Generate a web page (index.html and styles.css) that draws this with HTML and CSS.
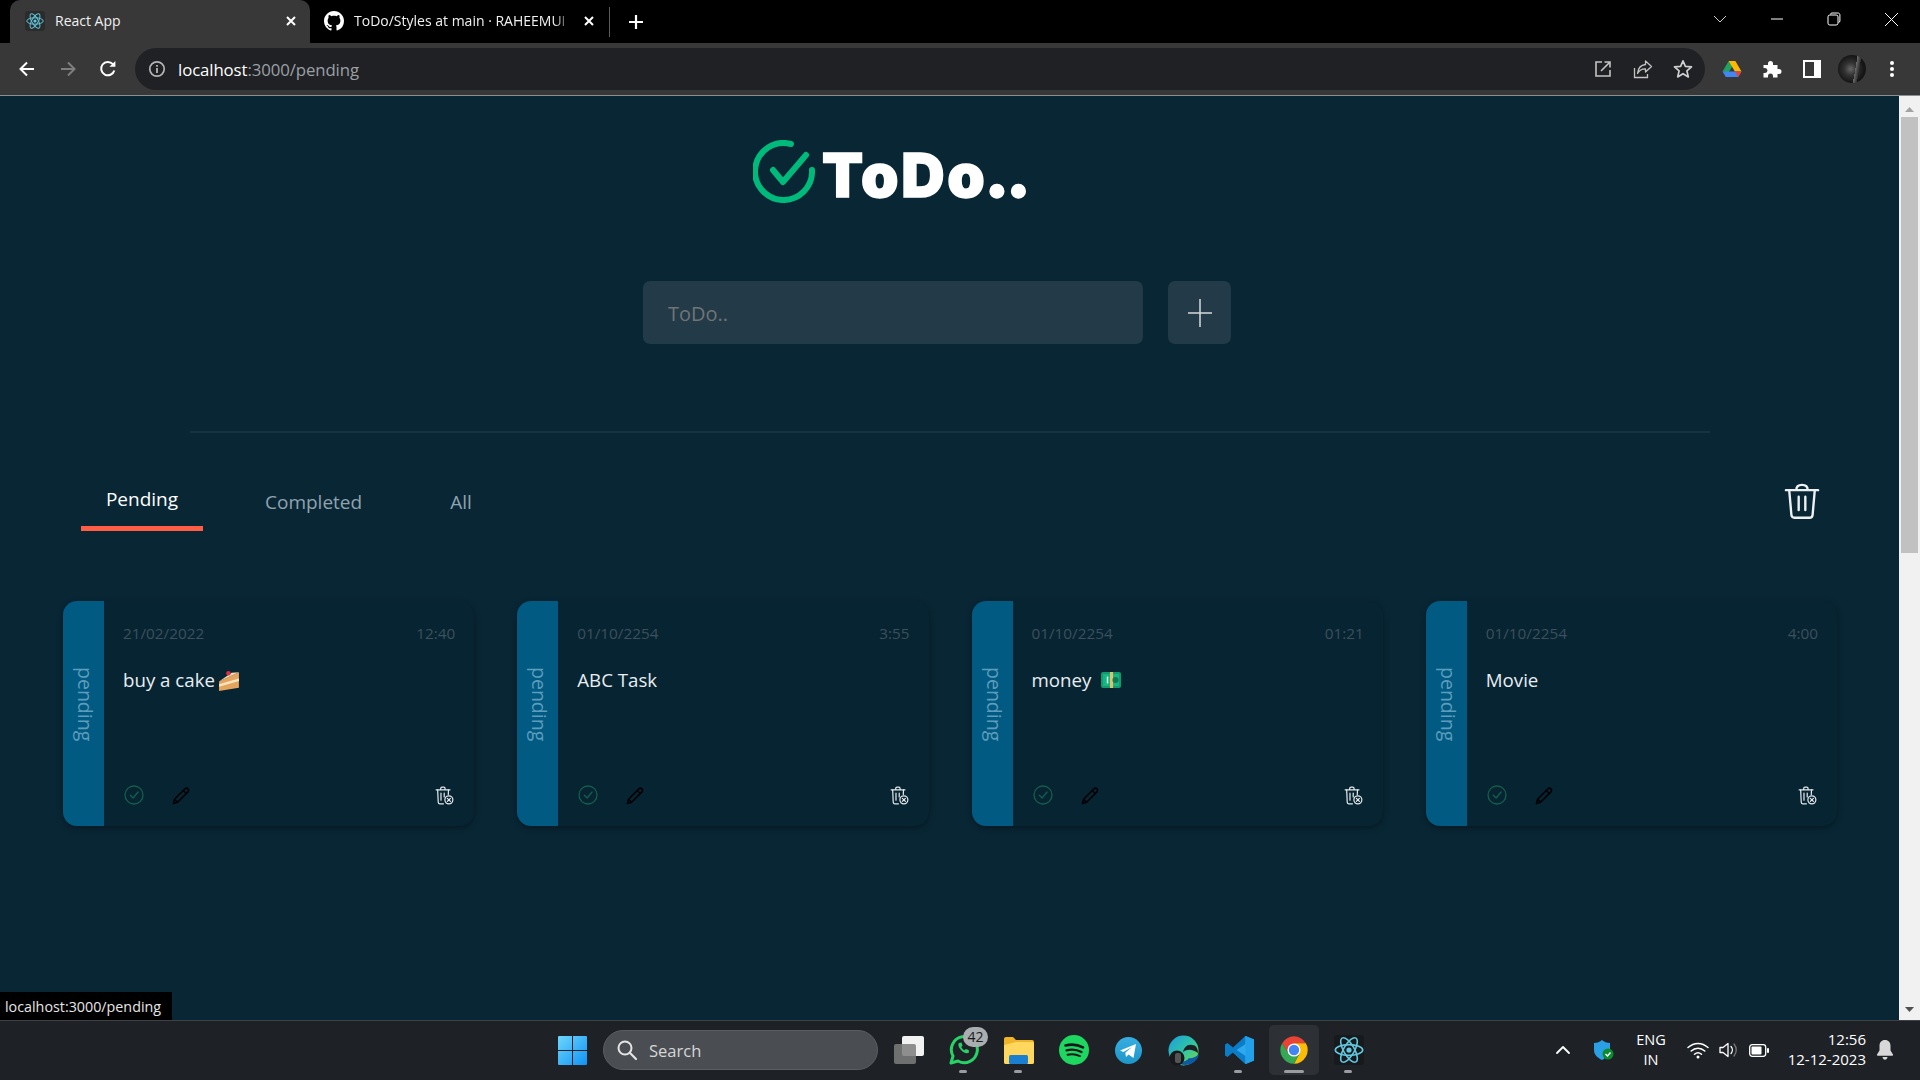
FILE: index.html
```html
<!DOCTYPE html>
<html lang="en">
<head>
<meta charset="utf-8">
<title>React App</title>
<link rel="stylesheet" href="styles.css">
</head>
<body>
<svg class="defs" width="0" height="0" aria-hidden="true">
  <defs>
    <symbol id="atom" viewBox="0 0 24 24">
      <g fill="none" stroke="#61c6de" stroke-width="1.3">
        <ellipse cx="12" cy="12" rx="11" ry="4.3"/>
        <ellipse cx="12" cy="12" rx="11" ry="4.3" transform="rotate(60 12 12)"/>
        <ellipse cx="12" cy="12" rx="11" ry="4.3" transform="rotate(120 12 12)"/>
      </g>
      <circle cx="12" cy="12" r="2.1" fill="#61c6de"/>
    </symbol>
    <symbol id="done" viewBox="0 0 20 20">
      <circle cx="10" cy="10" r="9" fill="none" stroke="#145f49" stroke-width="1.3"/>
      <path d="M6.300 10.200l2.800 2.800 5-6" fill="none" stroke="#145f49" stroke-width="1.3" stroke-linecap="round" stroke-linejoin="round"/>
    </symbol>
    <symbol id="pencil" viewBox="0 0 20 20">
      <path d="M1.500 18.500l1.200-4.600L13.600 3a2.200 2.200 0 0 1 3.200 3.200L5.900 17.200z" fill="none" stroke="#000" stroke-width="1.6" stroke-linejoin="round"/>
      <path d="M11.800 4.800l3.200 3.200M2.800 13.900l3.200 3.200" fill="none" stroke="#000" stroke-width="1.4"/>
    </symbol>
    <symbol id="bin" viewBox="0 0 20 20">
      <g fill="none" stroke="#e4e8ea" stroke-width="1.3" stroke-linecap="round" stroke-linejoin="round">
        <path d="M1.200 4h14.600M6 4V2.600c0-.9.6-1.400 1.400-1.400h1.800c.8 0 1.400.5 1.400 1.400V4"/>
        <path d="M2.800 4l.6 13.200c0 .9.7 1.500 1.500 1.500h4"/>
        <path d="M14.200 4l-.2 5M6.300 7.500v7.500M9.700 7.500v4"/>
        <circle cx="14.600" cy="14.600" r="4.200"/>
        <path d="M13 13l3.200 3.200M16.200 13L13 16.200"/>
      </g>
    </symbol>
  </defs>
</svg>

<div class="screen">
  <header class="tabstrip">
    <div class="tab tab-active">
      <span class="favicon"><svg width="18" height="18"><use href="#atom"/></svg></span>
      <span class="tab-title">React App</span>
      <svg class="tab-close" width="14" height="14" viewBox="0 0 14 14"><path d="M3 3l8 8M11 3l-8 8" stroke="#fff" stroke-width="2"/></svg>
    </div>
    <div class="tab">
      <svg class="gh" width="20" height="20" viewBox="0 0 16 16"><path fill="#fff" d="M8 0C3.58 0 0 3.58 0 8c0 3.54 2.29 6.53 5.47 7.59.4.07.55-.17.55-.38 0-.19-.01-.82-.01-1.49-2.01.37-2.53-.49-2.69-.94-.09-.23-.48-.94-.82-1.13-.28-.15-.68-.52-.01-.53.63-.01 1.08.58 1.23.82.72 1.21 1.87.87 2.33.66.07-.52.28-.87.51-1.07-1.78-.2-3.64-.89-3.64-3.95 0-.87.31-1.59.82-2.15-.08-.2-.36-1.02.08-2.12 0 0 .67-.21 2.2.82.64-.18 1.32-.27 2-.27.68 0 1.36.09 2 .27 1.53-1.04 2.2-.82 2.2-.82.44 1.1.16 1.92.08 2.12.51.56.82 1.27.82 2.15 0 3.07-1.87 3.75-3.65 3.95.29.25.54.73.54 1.48 0 1.07-.01 1.93-.01 2.2 0 .21.15.46.55.38A8.013 8.013 0 0016 8c0-4.42-3.58-8-8-8z"/></svg>
      <span class="tab-title tab-fade">ToDo/Styles at main · RAHEEMUI</span>
      <svg class="tab-close" width="14" height="14" viewBox="0 0 14 14"><path d="M3 3l8 8M11 3l-8 8" stroke="#fff" stroke-width="2"/></svg>
    </div>
    <span class="tab-sep"></span>
    <svg class="new-tab" width="18" height="18" viewBox="0 0 18 18"><path d="M9 2v14M2 9h14" stroke="#fff" stroke-width="2.2"/></svg>
    <div class="win-controls">
      <span class="win-btn"><svg width="14" height="10" viewBox="0 0 14 10"><path d="M1 2l6 6 6-6" fill="none" stroke="#cfcfcf" stroke-width="1"/></svg></span>
      <span class="win-btn"><svg width="14" height="14" viewBox="0 0 14 14"><path d="M1 7h12" stroke="#fff" stroke-width="1"/></svg></span>
      <span class="win-btn"><svg width="14" height="14" viewBox="0 0 14 14"><path d="M3.500 2.400c0-.9.6-1.400 1.400-1.400h6c1.200 0 2 .8 2 2v6c0 .8-.5 1.400-1.400 1.400" fill="none" stroke="#fff"/><rect x="1" y="3" width="10" height="10" rx="1.800" fill="#000" stroke="#fff"/></svg></span>
      <span class="win-btn"><svg width="15" height="15" viewBox="0 0 15 15"><path d="M1 1l13 13M14 1L1 14" stroke="#fff" stroke-width="1"/></svg></span>
    </div>
  </header>

  <nav class="toolbar">
    <span class="tool tool-back"><svg width="20" height="20" viewBox="0 0 20 20"><path d="M17 10H4M10 3.500L3.500 10l6.500 6.500" fill="none" stroke="#fff" stroke-width="2"/></svg></span>
    <span class="tool"><svg width="20" height="20" viewBox="0 0 20 20"><path d="M3 10h13M10 3.500l6.500 6.500-6.500 6.500" fill="none" stroke="#7e7e7e" stroke-width="2"/></svg></span>
    <span class="tool"><svg width="20" height="20" viewBox="0 0 20 20"><path d="M16.300 11.500A6.700 6.700 0 1 1 14.900 5.200" fill="none" stroke="#fff" stroke-width="2"/><path d="M11.400 7.800h6V1.900z" fill="#fff"/></svg></span>
    <div class="omnibox">
      <svg class="info" width="20" height="20" viewBox="0 0 20 20"><circle cx="10" cy="10" r="7.200" fill="none" stroke="#b5b5b5" stroke-width="1.7"/><path d="M10 9v5M10 6v1.700" stroke="#b5b5b5" stroke-width="1.800"/></svg>
      <span class="url"><span class="url-host">localhost</span>:3000/pending</span>
      <span class="omni-actions">
        <span class="tool"><svg width="18" height="18" viewBox="0 0 18 18"><path d="M8 2H2v14h14v-6" fill="none" stroke="#c4c4c4" stroke-width="1.600"/><path d="M7 11l9-9M10.500 2H16v5.500" fill="none" stroke="#c4c4c4" stroke-width="1.600"/></svg></span>
        <span class="tool"><svg width="20" height="20" viewBox="0 0 20 20"><path d="M1.500 9v9.500h13V15" fill="none" stroke="#c4c4c4" stroke-width="1.300"/><path d="M12.500 2l6 5.500-6 5.500V9.800C9 9.600 6.500 11 4.500 14.500 5 9.500 8 6 12.500 5.500z" fill="none" stroke="#c4c4c4" stroke-width="1.300" stroke-linejoin="round"/></svg></span>
        <span class="tool"><svg width="20" height="20" viewBox="0 0 20 20"><path d="M10 1.800l2.400 5.600 6.100.5-4.600 4 1.400 6L10 14.700l-5.300 3.200 1.400-6-4.600-4 6.100-.5z" fill="none" stroke="#d0d0d0" stroke-width="1.700" stroke-linejoin="round"/></svg></span>
      </span>
    </div>
    <div class="extensions">
      <span class="tool"><svg width="20" height="18" viewBox="0 0 20 18"><path d="M6.700 1h6.600l-3.400 6-3.300 5.500L.5 11.500z" fill="#1ea362"/><path d="M6.700 1h6.600l6.200 10.500h-6.600z" fill="#ffba00"/><path d="M.5 11.500h19l-3.300 5.500H3.800z" fill="#4285f4"/><path d="M13 11.500h6.500L16.200 17z" fill="#ea4335"/></svg></span>
      <span class="tool"><svg width="20" height="20" viewBox="0 0 20 20"><path d="M1.500 6H6V4.500a2.500 2.500 0 0 1 5 0V6h4.500v4H17a2.500 2.500 0 0 1 0 5h-1.500v3.500H11V17a2.500 2.500 0 0 0-5 0v1.500H1.500V14H3a2.500 2.500 0 0 0 0-5H1.500z" fill="#fff"/></svg></span>
      <span class="tool"><svg width="18" height="18" viewBox="0 0 18 18"><path fill="#fff" d="M0 0h18v18H0z"/><path fill="#383838" d="M2 2h9v14H2z"/></svg></span>
      <span class="tool"><span class="avatar"></span></span>
      <span class="tool"><svg width="6" height="18" viewBox="0 0 6 18"><circle cx="3" cy="3" r="2" fill="#fff"/><circle cx="3" cy="9" r="2" fill="#fff"/><circle cx="3" cy="15" r="2" fill="#fff"/></svg></span>
    </div>
  </nav>

  <div class="viewport">
    <main class="page">
      <div class="brand">
        <svg width="62" height="63" viewBox="0 0 62 63"><path d="M38 4A28.500 28.500 0 1 0 59 30" fill="none" stroke="#00ba7c" stroke-width="6" stroke-linecap="round"/><path d="M20 30l10 12 23-27" fill="none" stroke="#00ba7c" stroke-width="6" stroke-linecap="round" stroke-linejoin="round"/></svg>
        <h1 class="brand-name">ToDo<span class="brand-dots">..</span></h1>
      </div>

      <form class="add-form">
        <input class="add-input" type="text" placeholder="ToDo..">
        <button class="add-btn" type="button" aria-label="Add"><svg width="26" height="30" viewBox="0 0 26 30"><path d="M13 1v28M1 15h24" stroke="#d5d9dc" stroke-width="1.500"/></svg></button>
      </form>

      <hr class="divider">

      <div class="filters">
        <a class="filter filter-active">Pending</a>
        <a class="filter">Completed</a>
        <a class="filter">All</a>
        <svg class="clear-all" width="36" height="37" viewBox="0 0 38 38"><g fill="none" stroke="#eef1f2" stroke-width="2.500" stroke-linecap="round" stroke-linejoin="round"><path d="M2 7h34M13 7C13 3.500 15.500 1.500 19 1.500S25 3.500 25 7"/><path d="M5.500 7l2.300 26c.2 2 1.300 3.200 3.200 3.200h16c1.900 0 3-1.200 3.200-3.200l2.300-26"/><path d="M15.500 14v14M22.500 14v14"/></g></svg>
      </div>

      <section class="cards">
        <article class="card">
          <div class="card-status"><span>pending</span></div>
          <div class="card-body">
            <div class="card-meta"><span>21/02/2022</span><span>12:40</span></div>
            <p class="card-title">buy a cake<svg class="emoji" width="23" height="23" viewBox="0 0 22 22"><path d="M1 12L20 3v15L1 21z" fill="#e5a45c"/><path d="M1 12L13 3.500 20 3 1 12z" fill="#f3dcb6"/><path d="M1 14.500l19-5.500v2.500L1 17z" fill="#f7e4c3"/><circle cx="10" cy="4" r="2.200" fill="#dd2e44"/></svg></p>
            <div class="card-actions"><svg class="check" width="20" height="20"><use href="#done"/></svg><svg class="edit" width="19" height="19"><use href="#pencil"/></svg><svg class="remove" width="19" height="19"><use href="#bin"/></svg></div>
          </div>
        </article>
        <article class="card">
          <div class="card-status"><span>pending</span></div>
          <div class="card-body">
            <div class="card-meta"><span>01/10/2254</span><span>3:55</span></div>
            <p class="card-title">ABC Task</p>
            <div class="card-actions"><svg class="check" width="20" height="20"><use href="#done"/></svg><svg class="edit" width="19" height="19"><use href="#pencil"/></svg><svg class="remove" width="19" height="19"><use href="#bin"/></svg></div>
          </div>
        </article>
        <article class="card">
          <div class="card-status"><span>pending</span></div>
          <div class="card-body">
            <div class="card-meta"><span>01/10/2254</span><span>01:21</span></div>
            <p class="card-title">money<svg class="emoji-money" width="20" height="16" viewBox="0 0 20 16"><rect width="20" height="16" rx="2" fill="#0f9d6e"/><rect x="2" y="2" width="16" height="12" fill="#17b584"/><rect x="9" width="3" height="16" fill="#e7bd68"/><circle cx="14.500" cy="8" r="3" fill="#0c7a55"/><path d="M6.500 4.500v7" stroke="#c9f3e1" stroke-width="1.500"/></svg></p>
            <div class="card-actions"><svg class="check" width="20" height="20"><use href="#done"/></svg><svg class="edit" width="19" height="19"><use href="#pencil"/></svg><svg class="remove" width="19" height="19"><use href="#bin"/></svg></div>
          </div>
        </article>
        <article class="card">
          <div class="card-status"><span>pending</span></div>
          <div class="card-body">
            <div class="card-meta"><span>01/10/2254</span><span>4:00</span></div>
            <p class="card-title">Movie</p>
            <div class="card-actions"><svg class="check" width="20" height="20"><use href="#done"/></svg><svg class="edit" width="19" height="19"><use href="#pencil"/></svg><svg class="remove" width="19" height="19"><use href="#bin"/></svg></div>
          </div>
        </article>
      </section>
      <div class="status-bubble">localhost:3000/pending</div>
    </main>
    <aside class="scrollbar">
      <svg width="21" height="17" viewBox="0 0 21 17"><path d="M10.500 7L15 12H6z" fill="#a3a3a3"/></svg>
      <span class="thumb"></span>
      <svg class="scroll-down" width="21" height="17" viewBox="0 0 21 17"><path d="M10.500 10L15 5H6z" fill="#505050"/></svg>
    </aside>
  </div>

  <footer class="taskbar">
    <svg class="start" width="29" height="29" viewBox="0 0 29 29"><defs><linearGradient id="win" x1="0" y1="0" x2="1" y2="1"><stop offset="0" stop-color="#6fd6fb"/><stop offset="1" stop-color="#0e93f5"/></linearGradient></defs><path fill="url(#win)" d="M0 1a1 1 0 0 1 1-1h13v14H0zM15 0h13a1 1 0 0 1 1 1v13H15zM0 15h14v14H1a1 1 0 0 1-1-1zM15 15h14v13a1 1 0 0 1-1 1H15z"/></svg>
    <div class="search">
      <svg width="22" height="22" viewBox="0 0 22 22"><circle cx="9" cy="9" r="6.500" fill="none" stroke="#e4e4e4" stroke-width="2"/><path d="M13.800 13.800L20 20" stroke="#e4e4e4" stroke-width="2.200" stroke-linecap="round"/></svg>
      <span>Search</span>
    </div>
    <div class="apps">
      <span class="app"><svg width="30" height="28" viewBox="0 0 30 28"><rect x="8" y="0" width="22" height="20" rx="2" fill="#f2f2f2"/><rect x="0" y="8" width="22" height="20" rx="2" fill="#7c7c7c" fill-opacity=".85"/></svg></span>
      <span class="app app-open"><svg width="30" height="32" viewBox="0 0 30 32"><path d="M2 29l2-7a13 13 0 1 1 5 5z" fill="none" stroke="#25d366" stroke-width="3" stroke-linejoin="round"/><path d="M10 9c-1.500 2 0 5 2.500 7.500S18 20 20 18.500l-.3-2.500-3-1-1.200 1.300c-1.500-.6-2.500-1.700-3.200-3.200L13.500 11.500l-1-3z" fill="#25d366"/></svg><span class="badge">42</span></span>
      <span class="app app-open"><svg width="31" height="28" viewBox="0 0 31 28"><path d="M1 3a2 2 0 0 1 2-2h7l3 3h16a2 2 0 0 1 2 2v20a2 2 0 0 1-2 2H3a2 2 0 0 1-2-2z" fill="#f0b429"/><path d="M1 9l12-3h16a2 2 0 0 1 2 2v18a2 2 0 0 1-2 2H3a2 2 0 0 1-2-2z" fill="#ffd75e"/><rect x="6" y="19" width="19" height="9" rx="1.500" fill="#1a7fd1"/></svg></span>
      <span class="app"><svg width="30" height="30" viewBox="0 0 30 30"><circle cx="15" cy="15" r="15" fill="#1ed760"/><g fill="none" stroke="#14181c" stroke-linecap="round"><path d="M6.500 10.500c6-1.500 12-1 17.500 1.800" stroke-width="2.600"/><path d="M7.500 15.300c5-1.200 10.500-.7 15 1.700" stroke-width="2.300"/><path d="M8.500 19.800c4.500-1 8.500-.6 12.500 1.300" stroke-width="1.900"/></g></svg></span>
      <span class="app"><svg width="27" height="27" viewBox="0 0 27 27"><defs><linearGradient id="tg" x1="0" y1="0" x2="0" y2="1"><stop offset="0" stop-color="#37aee2"/><stop offset="1" stop-color="#1e96c8"/></linearGradient></defs><circle cx="13.500" cy="13.500" r="13.500" fill="url(#tg)"/><path d="M5 13.500L21 7l-2.500 14-5-3.500-2.500 2.500-.7-4.300L17 10l-8.500 5z" fill="#fff"/></svg></span>
      <span class="app"><svg width="31" height="31" viewBox="0 0 31 31"><defs><linearGradient id="edge" x1="0" y1="0" x2="1" y2="1"><stop offset="0" stop-color="#1b9de2"/><stop offset=".55" stop-color="#31c7a0"/><stop offset="1" stop-color="#7fd83f"/></linearGradient></defs><circle cx="15.500" cy="15.500" r="15" fill="url(#edge)"/><path d="M31 19c-1 7-8 11-14 11-3 0-6-1-8-3 5 1 10-1 12-4 1 1 6 0 10-4z" fill="#0c59a4"/><path d="M15 17c5-4 11-2 15 1 0-3-1-8-6-8-5-1-8 3-9 7z" fill="#1d2126"/><circle cx="9" cy="23" r="7.500" fill="#17191b"/><rect x="7" y="18" width="6" height="10" rx="2" fill="#555"/></svg></span>
      <span class="app app-open"><svg width="30" height="30" viewBox="0 0 30 30"><path d="M21.500 1L30 4.500v21L21.500 29 7 15.500z" fill="#2ea8ee"/><path d="M21.500 1L9 12.500 3.500 8 1 9.500v11L3.500 22 9 17.500 21.500 29V21L12.500 15l9-6z" fill="#0a7cc8"/><path d="M21.500 1l8.500 3.500v21L21.500 29z" fill="#23a0ea"/></svg></span>
      <span class="app app-current"><svg width="30" height="30" viewBox="0 0 48 48"><path d="M5 13A22 22 0 0 1 43 13H24l-9 16z" fill="#ea4335"/><path d="M43 13A22 22 0 0 1 24 46l9-17-9-16z" fill="#fbbc04"/><path d="M5 13A22 22 0 0 0 24 46l9-17H15z" fill="#34a853"/><circle cx="24" cy="24" r="10.500" fill="#fff"/><circle cx="24" cy="24" r="8.300" fill="#4285f4"/></svg></span>
      <span class="app app-open"><svg class="app-square" width="30" height="30"><use href="#atom"/></svg></span>
    </div>
    <div class="tray">
      <svg class="tray-caret" width="16" height="10" viewBox="0 0 16 10"><path d="M2 8l6-6 6 6" fill="none" stroke="#fff" stroke-width="1.800" stroke-linecap="round" stroke-linejoin="round"/></svg>
      <svg class="tray-shield" width="20" height="20" viewBox="0 0 20 20"><path d="M0 3c3 0 6-1 8-3 2 2 5 3 8 3v7c0 5-4 8-8 10-4-2-8-5-8-10z" fill="#2a9fe6"/><circle cx="14" cy="14" r="5.500" fill="#0b8a2e"/><path d="M11.500 14l2 2 3-3.500" fill="none" stroke="#fff" stroke-width="1.400"/></svg>
      <div class="lang"><span>ENG</span><span>IN</span></div>
      <svg class="tray-wifi" width="22" height="18" viewBox="0 0 22 18"><g fill="none" stroke="#fff" stroke-width="1.500" stroke-linecap="round"><path d="M1 6.500c6-5.500 14-5.500 20 0"/><path d="M4.200 10c4-3.600 9.600-3.600 13.600 0"/><path d="M7.500 13.300c2-1.700 5-1.700 7 0"/></g><circle cx="11" cy="16" r="1.500" fill="#fff"/></svg>
      <svg class="tray-volume" width="20" height="18" viewBox="0 0 20 18"><path d="M1 6.500h3L9 2.500v13l-5-4H1z" fill="none" stroke="#fff" stroke-width="1.300" stroke-linejoin="round"/><path d="M12 5.500c1.800 2 1.800 5 0 7" fill="none" stroke="#fff" stroke-width="1.300" stroke-linecap="round"/><path d="M15 3c3 3.500 3 8.500 0 12" fill="none" stroke="#777" stroke-width="1.300" stroke-linecap="round"/></svg>
      <svg class="tray-battery" width="20" height="13" viewBox="0 0 20 13"><rect x=".7" y=".7" width="16" height="11.600" rx="2.500" fill="none" stroke="#fff" stroke-width="1.300"/><rect x="2.500" y="2.500" width="10" height="8" rx="1" fill="#fff"/><rect x="18" y="4" width="2" height="5" rx="1" fill="#fff"/></svg>
      <div class="clock"><span>12:56</span><span>12-12-2023</span></div>
      <svg class="tray-bell" width="18" height="20" viewBox="0 0 18 20"><path d="M9 0c3.500 0 5.500 2.500 5.500 6v4.500L17 14.500a.8.800 0 0 1-.7 1.200H1.700a.8.800 0 0 1-.7-1.200l2.500-4V6C3.500 2.500 5.500 0 9 0z" fill="#d8d8d8"/><path d="M6.500 17h5c-.3 1.800-1.200 2.700-2.500 2.700S6.800 18.800 6.500 17z" fill="#d8d8d8"/></svg>
    </div>
  </footer>
</div>
</body>
</html>
```

FILE: styles.css
```css
* { box-sizing: border-box; }
html, body { margin: 0; height: 100%; overflow: hidden; }
body { font-family: "Open Sans", "Noto Sans", sans-serif; background: #092635; color: #fff; }
svg { display: block; flex: none; }
.defs { position: absolute; }
.screen { height: 100vh; display: flex; flex-direction: column; }

/* tab strip */
.tabstrip { height: 43px; flex: none; background: #000; display: flex; align-items: center; padding-left: 10px; }
.tab { width: 298px; height: 43px; display: flex; align-items: center; padding: 0 12px 2px 14px; font-size: 14px; color: #f0f0f0; }
.tab-active { width: 300px; background: #383838; border-radius: 10px 10px 0 0; padding: 0 12px 2px 15px; }
.favicon { width: 20px; height: 20px; display: flex; align-items: center; justify-content: center; background: #2b2b2b; border-radius: 3px; }
.tab-title { flex: 1; min-width: 0; margin-left: 10px; white-space: nowrap; }
.tab-fade { -webkit-mask-image: linear-gradient(to right, #000 92%, transparent 100%); mask-image: linear-gradient(to right, #000 92%, transparent 100%); margin-right: 10px; }
.tab-sep { width: 1px; height: 30px; background: #5c5c5c; margin-left: 1px; }
.new-tab { margin-left: 17px; }
.win-controls { margin-left: auto; display: flex; }
.win-btn { width: 57px; height: 43px; display: flex; align-items: center; justify-content: center; margin-top: -5px; }
.win-btn:last-child { width: 58px; }

/* toolbar */
.toolbar { height: 53px; flex: none; background: #383838; border-bottom: 1px solid #8a8f92; display: flex; align-items: center; padding: 0 8px 1px 8px; }
.tool { width: 40px; height: 36px; display: flex; align-items: center; justify-content: center; flex: none; }
.tool-back { margin: 0 1px 0 -1px; }
.omnibox { flex: 1; height: 42px; margin-left: 7px; background: #202124; border-radius: 21px; display: flex; align-items: center; padding: 0 2px 0 12px; }
.url { margin-left: 11px; padding-top: 1px; font-size: 16.800px; letter-spacing: -.1px; color: #9aa0a6; }
.url-host { color: #fff; }
.omni-actions { margin-left: auto; display: flex; }
.extensions { display: flex; margin-left: 7px; }
.avatar { width: 28px; height: 28px; border-radius: 50%; background: linear-gradient(100deg, transparent 60%, #6a6a6a 60%, #2e2e2e 72%, transparent 72%), radial-gradient(circle at 45% 50%, #666 0, #333 30%, #151515 65%); }

/* page */
.viewport { flex: 1; min-height: 0; display: flex; }
.page { flex: 1; position: relative; min-width: 0; background: #092635; padding-top: 44px; }
.brand { display: flex; align-items: flex-start; margin-left: 753px; }
.brand-name { margin: 4px 0 -4px 7px; font-family: "Inter", sans-serif; font-weight: 900; font-size: 60px; line-height: 63px; letter-spacing: 2.600px; -webkit-text-stroke: 1.400px #fff; color: #fff; white-space: nowrap; }
.brand-dots { font-size: 68px; line-height: 0; letter-spacing: -4px; margin-left: -3px; }
.add-form { margin: 78px 0 0 643px; display: flex; gap: 25px; }
.add-input { width: 500px; height: 63px; background: #233a48; border: 0; border-radius: 7px; padding: 2px 25px 0; font: 20px "Open Sans", sans-serif; color: #fff; outline: 0; }
.add-input::placeholder { color: #6f7577; opacity: 1; }
.add-btn { width: 63px; height: 63px; background: #233a48; border: 0; border-radius: 7px; display: flex; align-items: center; justify-content: center; padding: 0; }
.divider { width: 1520px; height: 2px; margin: 87px 0 0 190px; border: 0; background: #17333f; }
.filters { margin-top: 39px; padding: 0 79px 0 81px; display: flex; align-items: flex-start; gap: 36px; }
.filter { height: 59px; padding: 0 26px; display: flex; align-items: center; font-size: 19px; color: #8fa3ae; }
.filter-active { padding: 0; color: #fff; border-bottom: 5px solid #ff5d44; width: 122px; justify-content: center; }
.clear-all { margin: 11px 0 0 auto; }
.cards { margin-top: 70px; padding: 0 62px 0 63px; display: grid; grid-template-columns: repeat(4, 1fr); gap: 43px; }
.card { height: 225px; display: flex; background: #072433; border-radius: 14px; overflow: hidden; box-shadow: 0 2px 6px rgba(0, 0, 0, .35); }
.card-status { width: 41px; flex: none; background: #005a82; padding: 66px 0 0 3px; display: flex; justify-content: center; }
.card-status span { writing-mode: vertical-rl; font-size: 19.500px; line-height: 24px; color: #5d9cbc; }
.card-body { flex: 1; display: flex; flex-direction: column; padding: 21px 19px 21px; min-width: 0; }
.card-meta { display: flex; justify-content: space-between; font-size: 15.300px; line-height: 22px; color: #3d505b; }
.card-title { margin: 22px 0 0; display: flex; align-items: center; gap: 3px; font-size: 18.700px; line-height: 28px; color: #e8eef1; }
.emoji-money { margin-left: 7px; }
.card-actions { margin-top: auto; display: flex; align-items: center; }
.check { margin-left: 1px; }
.edit { margin-left: 28px; }
.remove { margin-left: auto; margin-right: 1px; }

.status-bubble { position: absolute; left: 0; bottom: 0; height: 28px; width: 172px; padding: 1px 5px 0; background: #000; color: #e6e6e6; font-size: 14.300px; line-height: 27px; white-space: nowrap; overflow: hidden; }

/* scrollbar */
.scrollbar { width: 21px; flex: none; background: #f1f1f1; display: flex; flex-direction: column; align-items: center; padding-top: 4px; }
.thumb { width: 17px; height: 436px; background: #c1c1c1; }
.scroll-down { margin-top: auto; margin-bottom: 1px; }

/* taskbar */
.taskbar { height: 60px; flex: none; background: #1e2227; border-top: 1px solid #3d4144; display: flex; align-items: center; padding: 0 26px 1px 558px; }
.search { width: 275px; height: 40px; margin-left: 16px; display: flex; align-items: center; gap: 11px; padding-left: 12px; border-radius: 20px; background: #4a4e53; border: 1px solid #5a5d61; font-size: 16.500px; color: #d6d6d6; }
.apps { display: flex; margin-left: 3px; }
.app { width: 55px; height: 50px; display: flex; align-items: center; justify-content: center; position: relative; }
.app-open::after, .app-current::after { content: ""; position: absolute; left: 23px; bottom: 2px; width: 8px; height: 3px; border-radius: 2px; background: #9a9da0; }
.app-current { background: #2d3136; border-radius: 5px; width: 50px; margin: 0 2.500px; }
.app-current::after { left: 15px; width: 20px; }
.app-square { background: #17191c; border-radius: 3px; }
.badge { position: absolute; left: 27px; top: 2px; width: 25px; height: 20px; border-radius: 10px; background: #a9aeb0; color: #1a1a1a; font-size: 14px; line-height: 20px; text-align: center; }
.tray { margin-left: auto; display: flex; align-items: center; }
.tray-shield { margin-left: 23px; }
.lang { margin-left: 17px; padding-bottom: 1px; width: 40px; display: flex; flex-direction: column; align-items: center; font-size: 14.500px; line-height: 20px; }
.tray-wifi { margin-left: 16px; }
.tray-volume { margin-left: 10px; }
.tray-battery { margin-left: 10px; }
.clock { margin-left: 14px; padding-bottom: 3px; width: 83px; display: flex; flex-direction: column; align-items: flex-end; font-size: 15px; line-height: 20px; white-space: nowrap; }
.tray-bell { margin-left: 10px; }
```
